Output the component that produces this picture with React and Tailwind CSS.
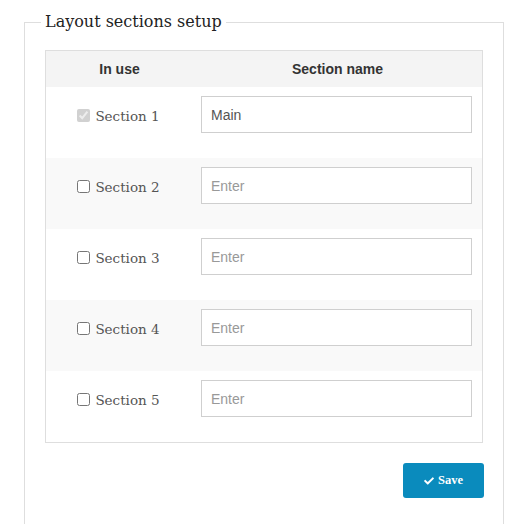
import React, { useState } from "react";
import { FaCheck } from "react-icons/fa";

const SECTIONS = [
  { id: 1, name: "Main", inUse: true, locked: true },
  { id: 2, name: "", inUse: false },
  { id: 3, name: "", inUse: false },
  { id: 4, name: "", inUse: false },
  { id: 5, name: "", inUse: false },
];

export default function App() {
  const [rows, setRows] = useState(SECTIONS);

  function update(id, patch) {
    setRows((rs) => rs.map((r) => (r.id === id ? { ...r, ...patch } : r)));
  }

  return (
    <div className="bg-white min-h-[524px] pl-6 pr-6 pt-[10px]">
      <fieldset className="border border-[#dedede] px-5 pb-6 min-h-[540px]">
        <legend className="-ml-1 px-1 text-[16px] leading-6 text-[#222] font-['DejaVu_Serif',serif]">
          Layout sections setup
        </legend>

        <div className="mt-4 border border-[#dedede]">
          <div className="grid grid-cols-[147px_1fr] h-[36px] bg-[#f4f4f4] items-center text-[14px] font-bold text-[#333] font-['Liberation_Sans',sans-serif]">
            <div className="text-center">In use</div>
            <div className="text-center">Section name</div>
          </div>

          {rows.map((r, i) => (
            <div
              key={r.id}
              className={
                "grid grid-cols-[147px_1fr] h-[71px] pt-[9px] " +
                (i % 2 === 1 ? "bg-[#f9f9f9]" : "bg-white")
              }
            >
              <label className="flex items-center justify-center gap-[5px] h-[37px] pt-[4px] pr-[2px] text-[13.5px] text-[#555] font-['DejaVu_Serif',serif]">
                <input
                  type="checkbox"
                  className="w-[13px] h-[13px] mt-[-3px]"
                  checked={r.inUse}
                  disabled={r.locked}
                  onChange={(e) => update(r.id, { inUse: e.target.checked })}
                />
                Section {r.id}
              </label>
              <div className="pl-2 pr-[10px]">
                <input
                  type="text"
                  value={r.name}
                  placeholder="Enter"
                  onChange={(e) => update(r.id, { name: e.target.value })}
                  className="w-full h-[37px] border border-[#cfcfcf] bg-white px-[9px] text-[14px] text-[#555] placeholder:text-[#999] outline-none font-['Liberation_Sans',sans-serif]"
                />
              </div>
            </div>
          ))}
        </div>

        <div className="flex justify-end mt-[20px] mr-[-1px]">
          <button className="flex items-center justify-center gap-[4px] w-[81px] h-[35px] rounded-[3px] bg-[#0a8bbd] text-white text-[12.5px] font-bold font-['Liberation_Serif',serif]">
            <FaCheck className="w-[10px] h-[10px]" />
            Save
          </button>
        </div>
      </fieldset>
    </div>
  );
}
